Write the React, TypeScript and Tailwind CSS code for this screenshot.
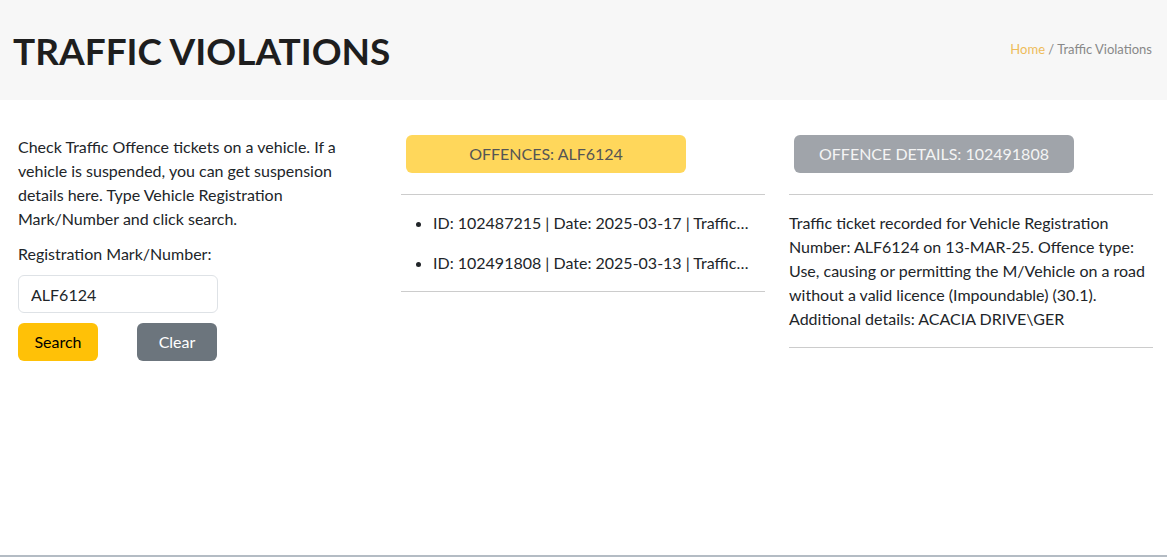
import React from "react";

const body = { fontFamily: '"Segoe UI", Lato, "Noto Sans", sans-serif' };

export default function App() {
  return (
    <div className="flex h-[557px] w-full flex-col bg-white text-[#212529]" style={body}>
      <header className="flex h-[100px] shrink-0 items-center justify-between bg-[#f7f7f7] pl-[13px] pr-[15px]">
        <h1 className="text-[37px] font-bold leading-none text-[#1e1e1e] [font-family:Lato,'Liberation_Sans',sans-serif]">
          TRAFFIC VIOLATIONS
        </h1>
        <nav className="text-[13px] text-[#888] [font-family:Lato,'Liberation_Sans',sans-serif]">
          <span className="text-[#eebc5a]">Home</span>
          <span> / Traffic Violations</span>
        </nav>
      </header>

      <main className="flex flex-1 pl-[18px] pt-[35px] text-[16px] leading-[24px]">
        <section className="w-[383px] shrink-0 pr-[19px]">
          <p className="max-w-[340px]">
            Check Traffic Offence tickets on a vehicle. If a vehicle is suspended, you can get suspension details here. Type Vehicle Registration Mark/Number and click search.
          </p>
          <label className="mt-[11px] block">Registration Mark/Number:</label>
          <input
            readOnly
            value="ALF6124"
            className="mt-[9px] block h-[38px] w-[200px] rounded-[6px] border border-[#dee2e6] px-[12px] text-[16px] text-[#212529] outline-none"
          />
          <div className="mt-[10px] flex gap-[39px]">
            <button className="h-[38px] w-[80px] rounded-[6px] bg-[#ffc107] text-[16px] text-black">Search</button>
            <button className="h-[38px] w-[80px] rounded-[6px] bg-[#6c757d] text-[16px] text-white">Clear</button>
          </div>
        </section>

        <section className="w-[364px] shrink-0">
          <div className="ml-[5px] flex h-[38px] w-[280px] items-center justify-center rounded-[6px] bg-[#ffd75b] text-[#555]">
            OFFENCES: ALF6124
          </div>
          <div className="mt-[21px] h-px bg-[#cccccc]" />
          <ul className="flex list-disc flex-col gap-[16px] py-[16px] pl-[32px] pr-[16px]">
            <li>
              <span className="block truncate">ID: 102487215 | Date: 2025-03-17 | Traffic ticket recorded for Vehicle Registration Number: ALF6124</span>
            </li>
            <li>
              <span className="block truncate">ID: 102491808 | Date: 2025-03-13 | Traffic ticket recorded for Vehicle Registration Number: ALF6124</span>
            </li>
          </ul>
          <div className="h-px bg-[#cccccc]" />
        </section>

        <section className="ml-[24px] w-[364px] shrink-0">
          <div className="ml-[5px] flex h-[38px] w-[280px] items-center justify-center rounded-[6px] bg-[#a0a4aa] text-[#f4f4f4]">
            OFFENCE DETAILS: 102491808
          </div>
          <div className="mt-[21px] h-px bg-[#cccccc]" />
          <p className="py-[16px]">
            Traffic ticket recorded for Vehicle Registration Number: ALF6124 on 13-MAR-25. Offence type: Use, causing or permitting the M/Vehicle on a road without a valid licence (Impoundable) (30.1). Additional details: ACACIA DRIVE\GER
          </p>
          <div className="h-px bg-[#cccccc]" />
        </section>
      </main>
      <div className="h-[2px] shrink-0 bg-[#b4bcc4]" />
    </div>
  );
}
